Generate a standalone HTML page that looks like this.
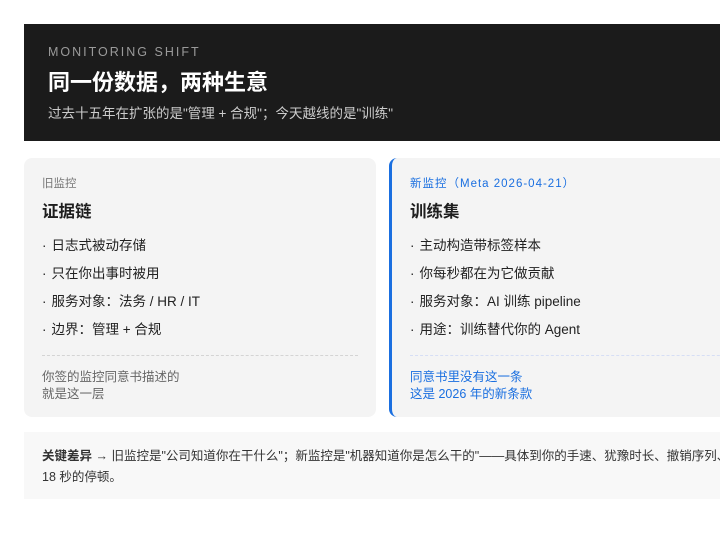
<!DOCTYPE html>
<html><head><meta charset="utf-8"><style>
*{margin:0;padding:0;box-sizing:border-box}
body{width:720px;height:557px;background:#fff;font-family:"Liberation Sans","Noto Sans CJK SC",sans-serif;overflow:hidden;position:relative}
.hd{position:absolute;left:24px;top:24px;width:720px;height:117px;background:#1b1b1b;padding:20px 24px}
.k{font-size:12.5px;letter-spacing:2px;color:#9a9a9a;line-height:16px}
.t{font-size:22px;font-weight:bold;color:#fff;line-height:28px;margin-top:9px}
.s{font-size:13.5px;color:#ccc;line-height:18px;margin-top:8px}
.c{position:absolute;top:158px;height:259px;background:#f4f4f4;border-radius:8px;padding:18px 18px}
.l{left:24px;width:352px}
.r{left:389px;width:360px;border-left:3px solid #1a6fe0;padding-left:18px}
.lb{font-size:11.5px;color:#777;line-height:16px}
.r .lb{color:#1a6fe0;letter-spacing:1px}
.ti{font-size:16.5px;font-weight:bold;color:#1e1e1e;line-height:22px;margin-top:9px}
ul{list-style:none;margin-top:9px}
li{font-size:13.5px;color:#222;line-height:28px}
li span{margin-right:5px}
.hr{border-top:1px dashed #d4d4d4;margin-top:11px;width:316px}
.r .hr{border-color:#d6def5;width:340px}
.f{font-size:12.5px;color:#666;line-height:17px;margin-top:13px}
.r .f{color:#1a6fe0}
.b{position:absolute;left:24px;top:432px;width:720px;height:67px;background:#f8f8f8;padding:14px 18px;font-size:12.5px;color:#333;line-height:21px;white-space:nowrap}
</style></head><body>
<div class="hd"><div class="k">MONITORING SHIFT</div><div class="t">同一份数据，两种生意</div><div class="s">过去十五年在扩张的是"管理 + 合规"；今天越线的是"训练"</div></div>
<div class="c l"><div class="lb">旧监控</div><div class="ti">证据链</div><ul><li><span>·</span>日志式被动存储</li><li><span>·</span>只在你出事时被用</li><li><span>·</span>服务对象：法务 / HR / IT</li><li><span>·</span>边界：管理 + 合规</li></ul><div class="hr"></div><div class="f">你签的监控同意书描述的<br>就是这一层</div></div>
<div class="c r"><div class="lb">新监控（Meta 2026-04-21）</div><div class="ti">训练集</div><ul><li><span>·</span>主动构造带标签样本</li><li><span>·</span>你每秒都在为它做贡献</li><li><span>·</span>服务对象：AI 训练 pipeline</li><li><span>·</span>用途：训练替代你的 Agent</li></ul><div class="hr"></div><div class="f">同意书里没有这一条<br>这是 2026 年的新条款</div></div>
<div class="b"><b>关键差异 →</b> 旧监控是"公司知道你在干什么"；新监控是"机器知道你是怎么干的"——具体到你的手速、犹豫时长、撤销序列、<br>18 秒的停顿。</div>
</body></html>
